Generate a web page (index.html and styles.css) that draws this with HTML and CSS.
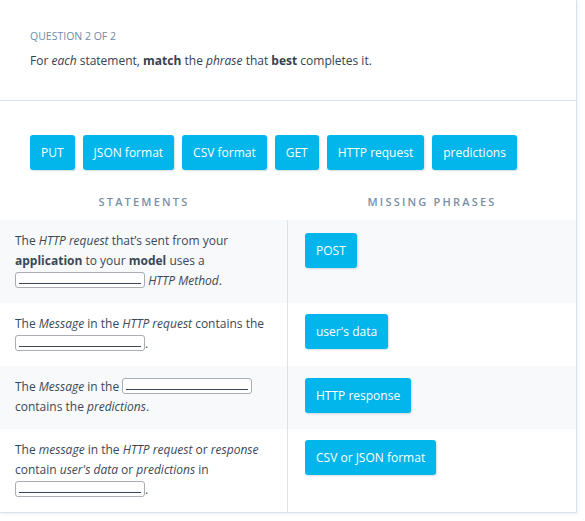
FILE: index.html
```html
<!DOCTYPE html>
<html>
<head>
<meta charset="utf-8">
<link rel="stylesheet" href="styles.css">
</head>
<body>
<div class="card">
  <div class="head">
    <div class="qnum">Question 2 of 2</div>
    <div class="instr">For <em>each</em> statement, <strong>match</strong> the <em>phrase</em> that <strong>best</strong> completes it.</div>
  </div>
  <div class="bank">
    <span class="chip">PUT</span>
    <span class="chip">JSON format</span>
    <span class="chip">CSV format</span>
    <span class="chip">GET</span>
    <span class="chip">HTTP request</span>
    <span class="chip">predictions</span>
  </div>
  <div class="table">
    <div class="th">Statements</div>
    <div class="th">Missing Phrases</div>

    <div class="row alt">
      <div class="stmt">The <em>HTTP request</em> that’s sent from your <strong>application</strong> to your <strong>model</strong> uses a <span class="blank"><span></span></span> <em>HTTP Method</em>.</div>
      <div class="phrase"><span class="chip">POST</span></div>
    </div>
    <div class="row">
      <div class="stmt">The <em>Message</em> in the <em>HTTP request</em> contains the <span class="blank"><span></span></span>.</div>
      <div class="phrase"><span class="chip">user's data</span></div>
    </div>
    <div class="row alt">
      <div class="stmt">The <em>Message</em> in the <span class="blank"><span></span></span> contains the <em>predictions</em>.</div>
      <div class="phrase"><span class="chip">HTTP response</span></div>
    </div>
    <div class="row">
      <div class="stmt">The <em>message</em> in the <em>HTTP request</em> or <em>response</em> contain <em>user's data</em> or <em>predictions</em> in <span class="blank"><span></span></span>.</div>
      <div class="phrase"><span class="chip">CSV or JSON format</span></div>
    </div>
  </div>
</div>
</body>
</html>
```
FILE: styles.css
```css
html, body {
  margin: 0;
  padding: 0;
  background: #ffffff;
}
body {
  font-family: "Open Sans", "Liberation Sans", sans-serif;
  color: #3b4856;
  width: 585px;
  height: 521px;
  overflow: hidden;
}
.card {
  width: 576px;
  border-right: 1px solid #dbe3ea;
  border-bottom: 1px solid #dbe3ea;
  box-shadow: 1px 1px 3px rgba(30, 50, 70, 0.08);
  background: #fff;
}
.head {
  padding: 29px 30px 30px;
  border-bottom: 1px solid #dbe3ea;
}
.qnum {
  font-size: 10.5px;
  line-height: 14px;
  text-transform: uppercase;
  color: #6f8ba5;
}
.instr {
  margin-top: 9px;
  font-size: 12px;
  line-height: 18px;
  color: #36424f;
}
.instr strong { font-weight: 700; }
.bank {
  display: flex;
  gap: 8px;
  padding: 34px 30px 0;
}
.chip {
  display: inline-flex;
  align-items: center;
  height: 35px;
  padding: 0 11px;
  background: #02b6ec;
  color: #fff;
  font-size: 12px;
  border-radius: 3px;
  box-shadow: 1px 1px 2px rgba(0, 60, 90, 0.18);
  box-sizing: border-box;
  white-space: nowrap;
}
.table {
  display: grid;
  grid-template-columns: 288px 288px;
  margin-top: 24px;
}
.th {
  text-align: center;
  font-size: 11px;
  line-height: 15px;
  font-weight: 600;
  letter-spacing: 2.2px;
  text-transform: uppercase;
  color: #7890a6;
  padding-bottom: 11px;
}
.row {
  display: contents;
}
.stmt {
  border-right: 1px solid #dbe3ea;
  padding: 11px 14px 12px 15px;
  font-size: 12px;
  line-height: 20px;
  color: #3b4856;
}
.phrase {
  padding: 13px 17px 0;
}
.row.alt .stmt, .row.alt .phrase {
  background: #f7f9fb;
}
.row:nth-child(4) .phrase { padding-top: 11px; }
.row:nth-child(5) .phrase { padding-top: 12px; }
.row:nth-child(6) .phrase { padding-top: 11px; }
.stmt strong { font-weight: 700; }
.blank {
  display: inline-block;
  vertical-align: middle;
  width: 130px;
  height: 16px;
  box-sizing: border-box;
  border: 1px solid #a7adb3;
  border-radius: 3px;
  background: #fff;
  padding: 0 3px;
  margin-top: -3px;
}
.blank span {
  display: block;
  height: 10px;
  border-bottom: 1px solid #3b4856;
}
```
